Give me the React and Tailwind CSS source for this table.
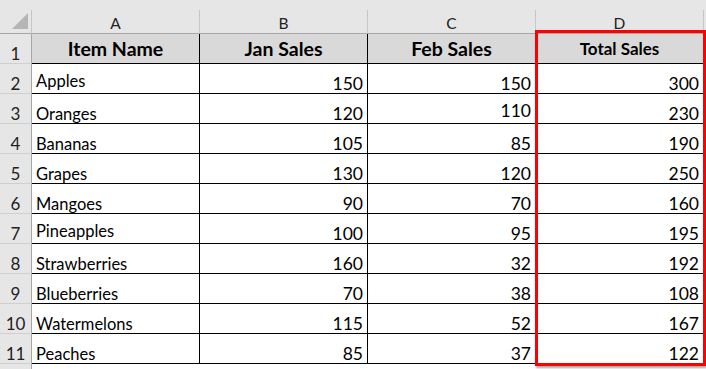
import React from "react";

const rows = [
  ["Apples", 150, 150, 300, [true, false, false, false]],
  ["Oranges", 120, 110, 230, [false, false, true, false]],
  ["Bananas", 105, 85, 190],
  ["Grapes", 130, 120, 250],
  ["Mangoes", 90, 70, 160],
  ["Pineapples", 100, 95, 195, [true, false, false, false]],
  ["Strawberries", 160, 32, 192],
  ["Blueberries", 70, 38, 108],
  ["Watermelons", 115, 52, 167],
  ["Peaches", 85, 37, 122],
];

const font = { fontFamily: "Lato, 'Open Sans', sans-serif" };

function Corner() {
  return (
    <div className="w-[32px] h-full border-r border-b border-r-[#c6c6c6] border-b-[#a6a6a6] bg-[#e6e6e6] relative">
      <svg width="32" height="23" className="absolute left-0 top-0">
        <polygon points="12,19 28,19 28,3" fill="#b5b5b5" />
      </svg>
    </div>
  );
}

function ColHead({ label }) {
  return (
    <div className="w-[168px] h-full flex items-center justify-center border-r border-b border-r-[#c6c6c6] border-b-[#a6a6a6] text-[15.5px] text-[#222] pt-[4px]">
      {label}
    </div>
  );
}

function RowNum({ n }) {
  return (
    <div className="w-[32px] h-full flex items-end justify-center pb-[0px] border-r border-b border-r-[#a6a6a6] border-b-[#cfcfcf] bg-[#e6e6e6] text-[17px] leading-[18px] text-[#222]">
      {n}
    </div>
  );
}

function Cell({ children, right, raised }) {
  return (
    <div
      className={
        "w-[168px] h-full flex border-r border-b border-black px-[4px] leading-[18px] text-black " +
        (right ? "justify-end text-[17.5px] " : "justify-start text-[16.5px] ") +
        (raised ? "items-end pb-[3px]" : "items-end pb-[0px]")
      }
    >
      {children}
    </div>
  );
}

export default function App() {
  return (
    <div className="w-[706px] h-[369px] bg-[#e6e6e6] overflow-hidden relative" style={font}>
      <div className="h-[10px]" />
      <div className="flex h-[24px]">
        <Corner />
        <ColHead label="A" />
        <ColHead label="B" />
        <ColHead label="C" />
        <ColHead label="D" />
      </div>
      <div className="flex h-[30px]">
        <RowNum n={1} />
        {["Item Name", "Jan Sales", "Feb Sales"].map((h) => (
          <div
            key={h}
            className="w-[168px] h-full flex items-end justify-center pb-[2px] bg-[#d9d9d9] border-r border-b border-black font-bold text-[19.5px] leading-[24px] text-black"
          >
            {h}
          </div>
        ))}
        <div className="w-[168px] h-full flex items-end justify-center pb-[3px] bg-[#d9d9d9] border-r border-b border-black font-bold text-[17px] leading-[22px] text-black">
          Total Sales
        </div>
      </div>
      {rows.map((r, i) => {
        const raised = r[4] || [false, false, false, false];
        return (
          <div key={i} className="flex h-[30px] bg-white">
            <RowNum n={i + 2} />
            <Cell raised={raised[0]}>{r[0]}</Cell>
            <Cell right raised={raised[1]}>{r[1]}</Cell>
            <Cell right raised={raised[2]}>{r[2]}</Cell>
            <Cell right raised={raised[3]}>{r[3]}</Cell>
            <div className="flex-1 bg-white" />
          </div>
        );
      })}
      <div className="flex h-[10px] bg-white">
        <div className="w-[32px] h-full border-r border-[#a6a6a6] bg-[#e6e6e6]" />
        <div className="flex-1" />
      </div>
      <div className="absolute left-[535px] top-[30px] w-[171px] h-[336px] border-[3px] border-[#ff0000] shadow-[1px_2px_2px_rgba(0,0,0,0.35)]" />
    </div>
  );
}
